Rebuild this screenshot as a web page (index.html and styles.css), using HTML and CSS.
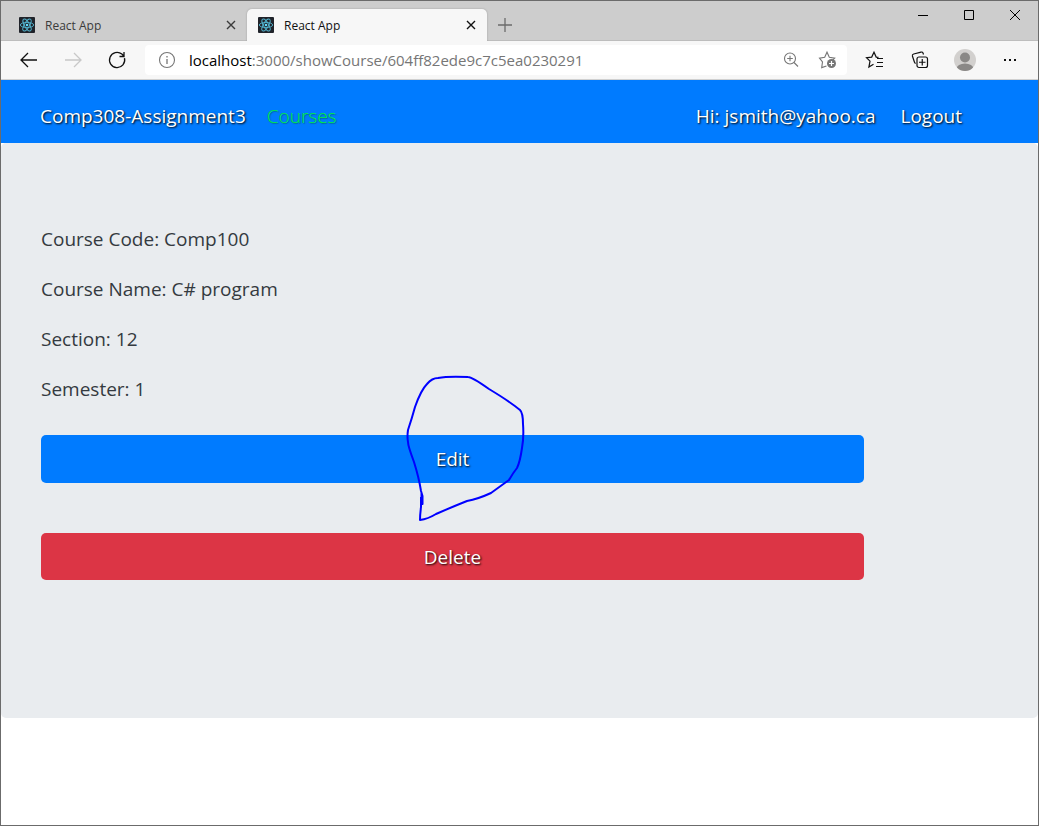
FILE: index.html
```html
<!DOCTYPE html>
<html lang="en">
<head>
<meta charset="utf-8">
<meta name="viewport" content="width=device-width, initial-scale=1">
<title>React App</title>
<link rel="stylesheet" href="styles.css">
</head>
<body>
<svg class="symbols" aria-hidden="true">
  <symbol id="react" viewBox="0 0 16 16">
    <rect width="16" height="16" rx="1" fill="#20232a"/>
    <g fill="none" stroke="#53b5d0" stroke-width="0.9">
      <ellipse cx="8" cy="8" rx="6.7" ry="2.6"/>
      <ellipse cx="8" cy="8" rx="6.7" ry="2.6" transform="rotate(60 8 8)"/>
      <ellipse cx="8" cy="8" rx="6.7" ry="2.6" transform="rotate(120 8 8)"/>
    </g>
    <circle cx="8" cy="8" r="1.3" fill="#61dafb"/>
  </symbol>
  <symbol id="cross" viewBox="0 0 10 10">
    <path d="M1 1l8 8M9 1l-8 8" fill="none" stroke="currentColor" stroke-width="1.4"/>
  </symbol>
</svg>
<div class="window">
  <header class="tabstrip">
    <div class="tab">
      <svg class="favicon"><use href="#react"/></svg>
      <span class="tab-title">React App</span>
      <button class="tab-close" aria-label="Close tab"><svg width="10" height="10"><use href="#cross"/></svg></button>
    </div>
    <div class="tab tab-active">
      <svg class="favicon"><use href="#react"/></svg>
      <span class="tab-title">React App</span>
      <button class="tab-close" aria-label="Close tab"><svg width="10" height="10"><use href="#cross"/></svg></button>
    </div>
    <button class="new-tab" aria-label="New tab"><svg width="14" height="14" viewBox="0 0 14 14"><path d="M7 0v14M0 7h14" stroke="#6b6b6b" stroke-width="1.3"/></svg></button>
    <div class="window-controls">
      <button aria-label="Minimize"><svg width="12" height="12" viewBox="0 0 12 12"><path d="M1 6.5h10" stroke="#000"/></svg></button>
      <button aria-label="Maximize"><svg width="12" height="12" viewBox="0 0 12 12"><path d="M1.5 1.5h9v9h-9z" fill="none" stroke="#000"/></svg></button>
      <button aria-label="Close window"><svg width="12" height="12" viewBox="0 0 12 12"><path d="M1 1l10 10M11 1L1 11" stroke="#000"/></svg></button>
    </div>
  </header>
  <div class="toolbar">
    <div class="history">
      <button aria-label="Back"><svg width="20" height="20" viewBox="0 0 20 20"><path d="M18 10H2.5M9 3L2 10l7 7" fill="none" stroke="#111" stroke-width="1.3"/></svg></button>
      <button aria-label="Forward" disabled><svg width="20" height="20" viewBox="0 0 20 20"><path d="M2 10h15.500M11 3l7 7-7 7" fill="none" stroke="#c8c8c8" stroke-width="1.3"/></svg></button>
      <button aria-label="Refresh"><svg width="20" height="20" viewBox="0 0 20 20"><path d="M17.500 8.200A7.600 7.600 0 1 1 14.900 4.100L17 6.300M17 2v4.500h-4.500" fill="none" stroke="#111" stroke-width="1.3"/></svg></button>
    </div>
    <div class="address">
      <svg class="info" width="18" height="18" viewBox="0 0 18 18"><circle cx="9" cy="9" r="7.500" fill="none" stroke="#767676" stroke-width="1.1"/><path d="M9 8v5M9 5v1.500" stroke="#767676" stroke-width="1.3"/></svg>
      <label class="host" for="url">localhost</label>
      <input class="path" id="url" type="text" value=":3000/showCourse/604ff82ede9c7c5ea0230291">
      <button aria-label="Zoom"><svg width="18" height="18" viewBox="0 0 18 18"><g fill="none" stroke="#767676" stroke-width="1.1"><circle cx="8" cy="7.500" r="5.500"/><path d="M12 11.500l4 4M8 4.700v5.600M5.200 7.500h5.600"/></g></svg></button>
      <button aria-label="Add to favorites"><svg width="20" height="20" viewBox="0 0 20 20"><path d="M8.500 16l-4.800 1.600.8-5.700L1.500 8.200l5.200-.9L9 2.200l2.300 5.100 5.400.9-2 2" fill="none" stroke="#767676" stroke-width="1.1"/><circle cx="13.500" cy="13.500" r="4.500" fill="#767676"/><path d="M13.500 11v5M11 13.500h5" stroke="#fff" stroke-width="1.200"/></svg></button>
    </div>
    <div class="tools">
      <button aria-label="Favorites"><svg width="20" height="20" viewBox="0 0 20 20"><path d="M8.500 14.200l-4.600 2.900 1.100-5.900L1.500 7.700l5.200-.6L9 2.200l2.200 4.900 2.300.3M12 8.500h6M12 12.500h6M11 16.500h7" fill="none" stroke="#111" stroke-width="1.2"/></svg></button>
      <button aria-label="Collections"><svg width="20" height="20" viewBox="0 0 20 20"><g fill="none" stroke="#111" stroke-width="1.2"><rect x="7" y="7" width="10.500" height="10.500" rx="2"/><path d="M12.250 9v6.500M9 12.250h6.500M13.500 4.500L13 3q-.5-1.300-2-.9L3.700 4Q2 4.500 2.400 6l2 6q.4 1.300 1.300 1.300"/></g></svg></button>
      <button aria-label="Profile"><svg width="22" height="22" viewBox="0 0 22 22"><defs><clipPath id="avatar"><circle cx="11" cy="11" r="11"/></clipPath></defs><g clip-path="url(#avatar)"><path d="M0 0h22v22H0z" fill="#d2d0ce"/><circle cx="11" cy="8.500" r="5" fill="#8a8886"/><ellipse cx="11" cy="20" rx="8.500" ry="5.500" fill="#8a8886"/></g></svg></button>
      <button aria-label="Settings and more"><svg width="18" height="18" viewBox="0 0 18 18"><path d="M3 8h2v2H3zM8 8h2v2H8zM13 8h2v2h-2z" fill="#111"/></svg></button>
    </div>
  </div>
  <div class="page">
    <nav class="navbar">
      <a class="brand" href="#">Comp308-Assignment3</a>
      <a class="courses" href="#">Courses</a>
      <span class="greeting">Hi: jsmith@yahoo.ca</span>
      <a class="logout" href="#">Logout</a>
    </nav>
    <main class="jumbotron">
      <p>Course Code: Comp100</p>
      <p>Course Name: C# program</p>
      <p>Section: 12</p>
      <p>Semester: 1</p>
      <div class="actions">
        <button class="btn btn-edit" type="button">Edit</button>
        <button class="btn btn-delete" type="button">Delete</button>
      </div>
    </main>
    <svg class="ink" width="122" height="150" viewBox="0 0 122 150" aria-hidden="true">
      <path d="M18.500 118V124L19.500 129V121L18 116Q16 103 11 87Q5 71 5 67Q4 62 5 55Q9 43 12 32Q18 15 24 9Q29 3 35 3Q45 1 65 2Q69 2 86 14Q106 26 117 35Q120 38 120 49Q121 62 119 73Q117 87 114 93Q110 98 106 105Q99 110 88 118Q75 124 64 126Q49 132 33 139Q25 144 17 145Q17 140 18 132V122" fill="none" stroke="#00f" stroke-width="2" stroke-linejoin="round"/>
    </svg>
  </div>
</div>
</body>
</html>
```
FILE: styles.css
```css
* {
  box-sizing: border-box;
}

body {
  margin: 0;
  background: #fff;
  font-family: "Open Sans", "Noto Sans", sans-serif;
}

button {
  display: flex;
  align-items: center;
  justify-content: center;
  padding: 0;
  border: 0;
  background: none;
  color: inherit;
  font: inherit;
}

.symbols {
  position: absolute;
  width: 0;
  height: 0;
}

.window {
  display: flex;
  flex-direction: column;
  min-height: 100vh;
  border: 1px solid #6b6b6b;
}

.tabstrip {
  display: flex;
  align-items: flex-end;
  height: 40px;
  padding-left: 6px;
  background: #cdcdcd;
  box-shadow: inset 0 -1px #bdbdbd;
}

.tab {
  display: flex;
  align-items: center;
  width: 240px;
  height: 32px;
  padding: 0 11px 0 12px;
  color: #3b3b3b;
  font-size: 12px;
}

.tab-active {
  padding-left: 11px;
  border-radius: 5px 5px 0 0;
  background: #f7f7f7;
  box-shadow: 0 0 2px #999;
  clip-path: inset(-3px -3px 0);
  color: #111;
}

.favicon {
  width: 16px;
  height: 16px;
}

.tab-title {
  flex: 1;
  padding-left: 10px;
}

.new-tab {
  width: 36px;
  height: 32px;
}

.window-controls {
  display: flex;
  align-self: flex-start;
  margin-left: auto;
}

.window-controls button {
  width: 46px;
  height: 28px;
}

.toolbar {
  display: flex;
  align-items: center;
  height: 39px;
  border-bottom: 1px solid #d0d0d0;
  background: #f7f7f7;
}

.history {
  display: flex;
  padding: 0 6px;
}

.history button {
  width: 44px;
}

.address {
  display: flex;
  flex: 1;
  align-items: center;
  min-width: 0;
  height: 30px;
  padding-right: 1px;
  border-radius: 4px;
  background: #fff;
  font-size: 15px;
}

.info {
  margin: 0 13px;
}

.host {
  color: #000;
}

.path {
  flex: 1;
  min-width: 0;
  padding: 0;
  border: 0;
  outline: 0;
  background: none;
  color: #767676;
  font: inherit;
}

.address button {
  width: 37px;
}

.tools {
  display: flex;
  padding: 0 6px 0 5px;
}

.tools button {
  width: 45px;
}

.page {
  position: relative;
}

.navbar {
  display: flex;
  align-items: center;
  height: 63px;
  padding: 8px 76px 0 39px;
  background: #007bff;
  color: #fff;
  font-size: 19px;
  text-shadow: 1px 1px 2px #000;
}

.navbar a {
  color: #fff;
  text-decoration: none;
}

.navbar .courses {
  margin-left: 21px;
  color: #00f040;
  font-weight: 300;
  text-shadow: 1px 1px 1px #00602080;
}

.greeting {
  margin-left: auto;
}

.logout {
  margin-left: 25px;
}

.jumbotron {
  padding: 81px 40px 138px;
  border-radius: 5px;
  background: #e9ecef;
  color: #343a40;
  font-size: 19px;
  line-height: 30px;
}

.jumbotron p {
  margin: 0 0 20px;
}

.actions {
  display: flex;
  flex-direction: column;
  gap: 50px;
  width: 86%;
  padding-top: 11px;
}

.btn {
  height: 48px;
  border-radius: 5px;
  color: #fff;
  font-size: 19px;
  text-shadow: 1px 1px 2px #000;
}

.btn-edit {
  background: #007bff;
}

.btn-delete {
  height: 47px;
  background: #dc3545;
}

.ink {
  position: absolute;
  top: 295px;
  left: 402px;
}
```
